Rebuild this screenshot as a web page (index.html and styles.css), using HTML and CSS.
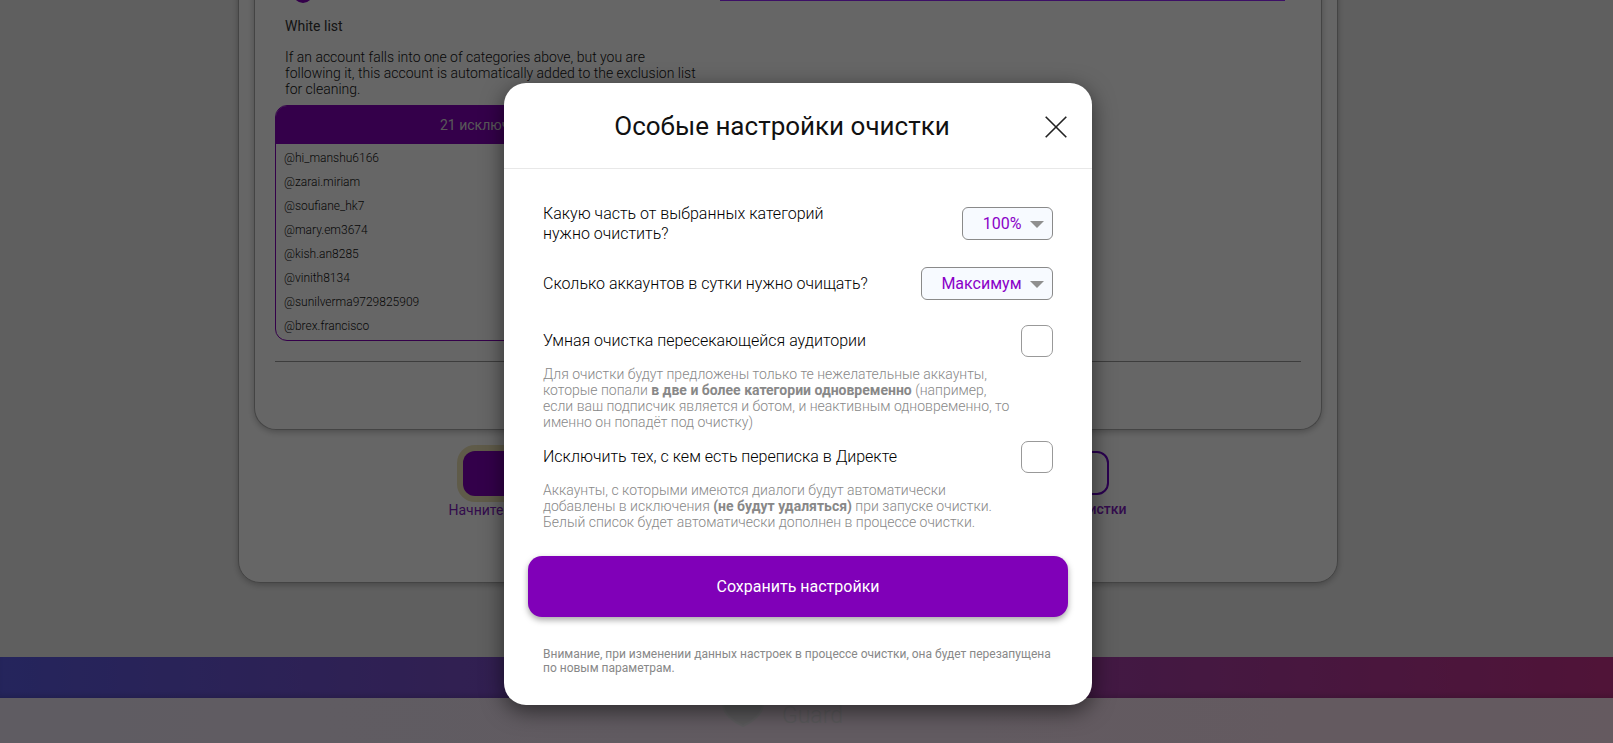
FILE: index.html
```html
<!DOCTYPE html>
<html lang="ru">
<head>
<meta charset="utf-8">
<title>Особые настройки очистки</title>
<link rel="stylesheet" href="styles.css">
</head>
<body>
<div class="page">
  <main class="outer">
    <section class="inner">
      <div class="columns">
        <div class="col-left">
          <span class="dot"></span>
          <h3 class="wl-title">White list</h3>
          <p class="wl-text">If an account falls into one of categories above, but you are following it, this account is automatically added to the exclusion list for cleaning.</p>
          <div class="list">
            <div class="list-head">21 исключений</div>
            <ul class="list-body">
              <li>@hi_manshu6166</li>
              <li>@zarai.miriam</li>
              <li>@soufiane_hk7</li>
              <li>@mary.em3674</li>
              <li>@kish.an8285</li>
              <li>@vinith8134</li>
              <li>@sunilverma9729825909</li>
              <li>@brex.francisco</li>
            </ul>
          </div>
        </div>
        <div class="col-right"><div class="right-line"></div></div>
      </div>
      <hr class="rule">
    </section>
    <div class="actions">
      <div class="action action-start">
        <div class="btn-start"></div>
        <div class="action-label">Начните</div>
      </div>
      <div class="action action-settings">
        <div class="btn-settings"></div>
        <div class="action-label">Настройки очистки</div>
      </div>
    </div>
  </main>
  <footer class="footer">
    <div class="band"></div>
    <div class="foot-main">
      <div class="logo">
        <svg class="shield" viewBox="0 0 42 40"><path d="M1 1V17C1 27 12 35 21 39C30 35 41 27 41 17V1" fill="#dedbe0" stroke="#e6e3e8" stroke-width="2"/></svg>
        <span class="logo-text">Guard</span>
      </div>
    </div>
  </footer>
</div>

<div class="overlay"></div>

<div class="modal">
  <header class="modal-head">
    <h2 class="modal-title">Особые настройки очистки</h2>
    <button class="close" type="button" aria-label="Закрыть">
      <svg viewBox="0 0 22 22" width="22" height="22"><path d="M0.7 0.7L21.3 21.3M21.3 0.7L0.7 21.3" fill="none" stroke="#222" stroke-width="1.6"/></svg>
    </button>
  </header>
  <div class="modal-body">
    <div class="row row-first">
      <div class="label">Какую часть от выбранных категорий<br>нужно очистить?</div>
      <div class="select select-pct"><span>100%</span><i class="caret"></i></div>
    </div>
    <div class="row row-second">
      <div class="label">Сколько аккаунтов в сутки нужно очищать?</div>
      <div class="select select-max"><span>Максимум</span><i class="caret"></i></div>
    </div>
    <div class="row row-third">
      <div class="label">Умная очистка пересекающейся аудитории</div>
      <div class="check"></div>
    </div>
    <p class="desc">Для очистки будут предложены только те нежелательные аккаунты,<br>которые попали <b>в две и более категории одновременно</b> (например,<br>если ваш подписчик является и ботом, и неактивным одновременно, то<br>именно он попадёт под очистку)</p>
    <div class="row row-fourth">
      <div class="label">Исключить тех, с кем есть переписка в Директе</div>
      <div class="check"></div>
    </div>
    <p class="desc desc-last">Аккаунты, с которыми имеются диалоги будут автоматически<br>добавлены в исключения <b>(не будут удаляться)</b> при запуске очистки.<br>Белый список будет автоматически дополнен в процессе очистки.</p>
    <button class="save" type="button">Сохранить настройки</button>
    <p class="note">Внимание, при изменении данных настроек в процессе очистки, она будет перезапущена<br>по новым параметрам.</p>
  </div>
</div>
</body>
</html>
```

FILE: styles.css
```css
* { box-sizing: border-box; }
html, body { margin: 0; height: 743px; overflow: hidden; }
body { background: #eeeeee; font-family: Roboto, "Noto Sans", sans-serif; color: #111; position: relative; width: 1613px; }

.page { height: 743px; overflow: hidden; display: flex; flex-direction: column; }

.outer {
  width: 1100px;
  height: 723px;
  margin: -140px 0 0 238px;
  flex: none;
  padding: 0 16px 0 15px;
  background: #fff;
  border: 1px solid #aaa;
  border-radius: 22px;
  box-shadow: 0 2px 6px rgba(0,0,0,.25);
}
.inner {
  width: 1068px;
  height: 569px;
  padding: 0 19px 67px 20px;
  background: #fff;
  border: 1px solid #aaa;
  border-top: 0;
  border-radius: 0 0 22px 22px;
  box-shadow: 0 2px 6px rgba(0,0,0,.25);
  display: flex;
  flex-direction: column;
  justify-content: flex-end;
}
.columns { display: flex; gap: 14px; }
.col-left { width: 431px; flex: none; display: flex; flex-direction: column; }
.col-right { flex: 1; display: flex; flex-direction: column; padding-right: 17px; }
.right-line { height: 2px; background: #9626ff; margin-top: -1px; }
.dot { width: 20px; height: 20px; border-radius: 50%; background: #8200ba; margin: -17px 0 14px 18px; display: block; }
.wl-title { margin: 0 0 14px 10px; font-size: 14px; font-weight: 400; line-height: 18px; color: #333; }
.wl-text { margin: 0 0 8px 10px; font-size: 14px; font-weight: 300; line-height: 16px; color: #111; width: 414px; }
.list { border: 1px solid #8200ba; border-radius: 12px; overflow: hidden; width: 100%; }
.list-head {
  height: 38px;
  line-height: 38px;
  background: #8200ba;
  color: #ddd;
  font-size: 14px;
  text-align: center;
}
.list-body { list-style: none; margin: 0; padding: 2px 8px 2px; }
.list-body li { height: 24px; line-height: 24px; font-size: 12px; font-weight: 300; color: #111; }
.rule { border: 0; height: 1px; background: #999; margin: 20px 0 0; width: 1026px; }

.actions { display: flex; justify-content: center; gap: 40px; margin-top: 21px; }
.action { width: 319px; }
.btn-start {
  width: 276px; height: 45px; margin: 0 auto 0 14px;
  border-radius: 12px;
  background: #8000b8;
  box-shadow: 0 0 0 6px #eee3b6;
}
.btn-settings {
  width: 276px; height: 44px; margin: 0 18px 0 auto;
  border: 2px solid #6900c8; border-radius: 12px;
  background: #fff;
}
.action-label { margin-top: 6px; font-size: 14px; font-weight: 500; line-height: 17px; color: #8020c0; white-space: nowrap; }
.action-start .action-label { text-align: left; font-weight: 400; }
.action-settings .action-label { text-align: right; }

.footer { flex: none; margin-top: 74px; }
.band { height: 41px; background: linear-gradient(90deg, #5c5ce6 0%, #c8328c 100%); box-shadow: inset 0 -5px 5px -2px rgba(0,0,0,.12); }
.foot-main { height: 60px; background: linear-gradient(90deg, #ede6f5 0%, #fce1f0 100%); display: flex; justify-content: center; }
.logo { display: flex; gap: 18px; margin: -11px 0 0 -48px; height: 40px; }
.shield { width: 42px; height: 40px; }
.logo-text { font-size: 23px; line-height: 24px; font-weight: 300; color: #e0dde3; margin-top: 17px; }

.overlay { position: absolute; inset: 0; background: rgba(0,0,0,.6); }

.modal {
  position: absolute;
  left: 504px;
  top: 83px;
  width: 588px;
  height: 622px;
  background: #fff;
  border-radius: 22px;
  box-shadow: 0 6px 22px rgba(0,0,0,.55);
}
.modal-head {
  height: 86px;
  border-bottom: 1px solid #e8e8e8;
  display: flex;
  align-items: center;
  padding: 0 25px 0 0;
}
.modal-title {
  margin: 0;
  flex: 1;
  padding-left: 15px;
  text-align: center;
  font-size: 26px;
  font-weight: 400;
  color: #111;
}
.close { width: 22px; height: 22px; padding: 0; border: 0; background: none; display: block; margin-top: 3px; }
.close svg { display: block; }

.modal-body { padding: 0 39.5px 0 39px; }
.row { display: flex; justify-content: space-between; align-items: center; }
.row-first { margin-top: 35px; }
.row-second { margin-top: 24px; }
.row-third { margin-top: 25px; }
.row-fourth { margin-top: 11px; }
.label { font-size: 16px; font-weight: 300; line-height: 19.5px; color: #000; }
.select {
  height: 33px;
  border: 1px solid #8a8a8a;
  border-radius: 6px;
  background: #f7faff;
  display: flex;
  align-items: center;
  justify-content: flex-end;
  gap: 8px;
  padding-right: 8px;
  color: #8a00c8;
  font-size: 16px;
  font-weight: 400;
}
.select-pct { width: 91px; }
.select-max { width: 132px; }
.caret { width: 0; height: 0; border-left: 7px solid transparent; border-right: 7px solid transparent; border-top: 7px solid #8f8f8f; display: block; margin-top: 1px; }
.check { width: 32px; height: 32px; border: 1px solid #999; border-radius: 7px; background: #fff; flex: none; }
.desc { margin: 9px 0 0; font-size: 14px; font-weight: 300; line-height: 16px; color: #888; }
.desc-last { margin-top: 9px; }
.desc b { font-weight: 700; color: #888; }
.save {
  display: block;
  width: 540px;
  height: 61px;
  margin: 26px 0 0 -15px;
  border: 0;
  border-radius: 14px;
  background: #8000b8;
  color: #fff;
  font: 400 16px Roboto, sans-serif;
  box-shadow: 0 3px 6px rgba(0,0,0,.35);
}
.note { margin: 30px 0 0; font-size: 12px; font-weight: 400; line-height: 14.4px; color: #888; }
```
